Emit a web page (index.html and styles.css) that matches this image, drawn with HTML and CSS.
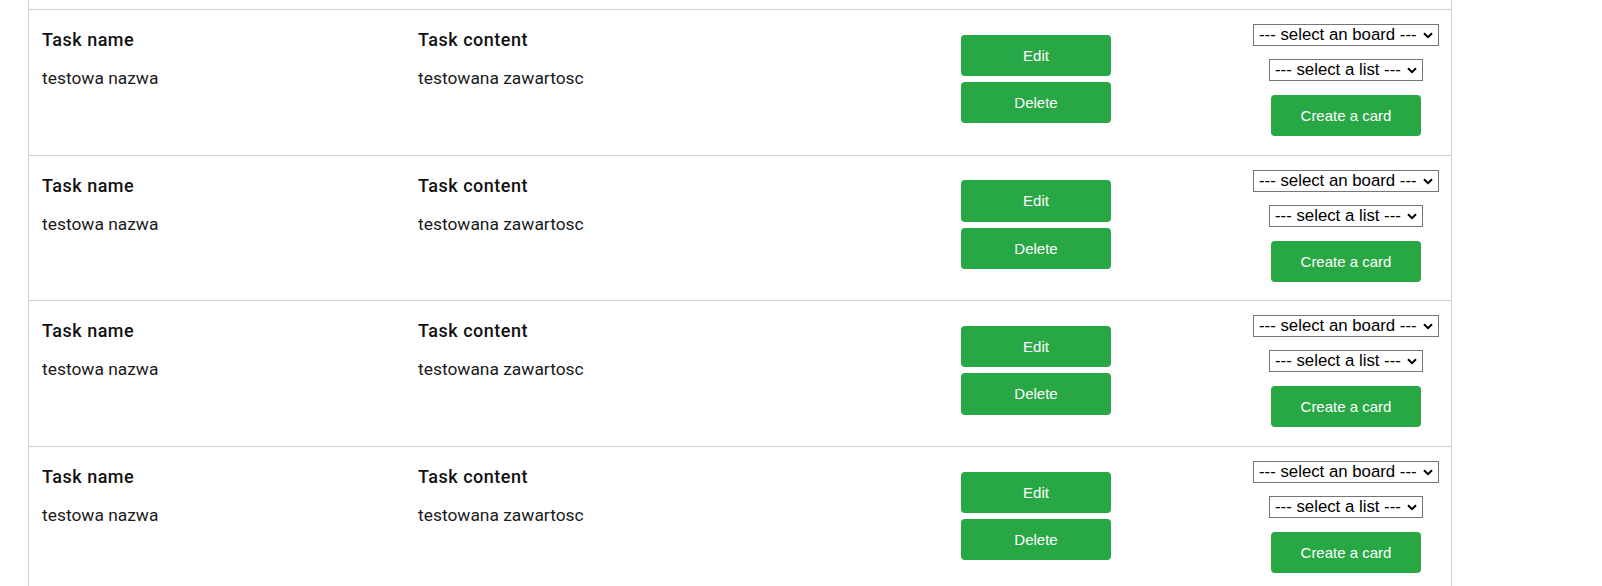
FILE: index.html
```html
<!DOCTYPE html>
<html lang="en">
<head>
<meta charset="utf-8">
<title>Tasks</title>
<link rel="stylesheet" href="styles.css">
</head>
<body>
<div class="board">
  <div class="tail"></div>

  <div class="task">
    <div class="field">
      <div class="label">Task name</div>
      <div class="value">testowa nazwa</div>
    </div>
    <div class="field">
      <div class="label">Task content</div>
      <div class="value">testowana zawartosc</div>
    </div>
    <div class="actions">
      <button class="btn">Edit</button>
      <button class="btn">Delete</button>
    </div>
    <div class="trello">
      <div class="pick pick-board">
        <select class="sel"><option>--- select an board ---</option></select>
        <svg class="chev" width="10" height="7" viewBox="0 0 10 7"><path d="M1 1.2 L5 5.2 L9 1.2" fill="none" stroke="#000" stroke-width="2"/></svg>
      </div>
      <div class="pick pick-list">
        <select class="sel"><option>--- select a list ---</option></select>
        <svg class="chev" width="10" height="7" viewBox="0 0 10 7"><path d="M1 1.2 L5 5.2 L9 1.2" fill="none" stroke="#000" stroke-width="2"/></svg>
      </div>
      <button class="btn btn-create">Create a card</button>
    </div>
  </div>

  <div class="task">
    <div class="field">
      <div class="label">Task name</div>
      <div class="value">testowa nazwa</div>
    </div>
    <div class="field">
      <div class="label">Task content</div>
      <div class="value">testowana zawartosc</div>
    </div>
    <div class="actions">
      <button class="btn">Edit</button>
      <button class="btn">Delete</button>
    </div>
    <div class="trello">
      <div class="pick pick-board">
        <select class="sel"><option>--- select an board ---</option></select>
        <svg class="chev" width="10" height="7" viewBox="0 0 10 7"><path d="M1 1.2 L5 5.2 L9 1.2" fill="none" stroke="#000" stroke-width="2"/></svg>
      </div>
      <div class="pick pick-list">
        <select class="sel"><option>--- select a list ---</option></select>
        <svg class="chev" width="10" height="7" viewBox="0 0 10 7"><path d="M1 1.2 L5 5.2 L9 1.2" fill="none" stroke="#000" stroke-width="2"/></svg>
      </div>
      <button class="btn btn-create">Create a card</button>
    </div>
  </div>

  <div class="task">
    <div class="field">
      <div class="label">Task name</div>
      <div class="value">testowa nazwa</div>
    </div>
    <div class="field">
      <div class="label">Task content</div>
      <div class="value">testowana zawartosc</div>
    </div>
    <div class="actions">
      <button class="btn">Edit</button>
      <button class="btn">Delete</button>
    </div>
    <div class="trello">
      <div class="pick pick-board">
        <select class="sel"><option>--- select an board ---</option></select>
        <svg class="chev" width="10" height="7" viewBox="0 0 10 7"><path d="M1 1.2 L5 5.2 L9 1.2" fill="none" stroke="#000" stroke-width="2"/></svg>
      </div>
      <div class="pick pick-list">
        <select class="sel"><option>--- select a list ---</option></select>
        <svg class="chev" width="10" height="7" viewBox="0 0 10 7"><path d="M1 1.2 L5 5.2 L9 1.2" fill="none" stroke="#000" stroke-width="2"/></svg>
      </div>
      <button class="btn btn-create">Create a card</button>
    </div>
  </div>

  <div class="task">
    <div class="field">
      <div class="label">Task name</div>
      <div class="value">testowa nazwa</div>
    </div>
    <div class="field">
      <div class="label">Task content</div>
      <div class="value">testowana zawartosc</div>
    </div>
    <div class="actions">
      <button class="btn">Edit</button>
      <button class="btn">Delete</button>
    </div>
    <div class="trello">
      <div class="pick pick-board">
        <select class="sel"><option>--- select an board ---</option></select>
        <svg class="chev" width="10" height="7" viewBox="0 0 10 7"><path d="M1 1.2 L5 5.2 L9 1.2" fill="none" stroke="#000" stroke-width="2"/></svg>
      </div>
      <div class="pick pick-list">
        <select class="sel"><option>--- select a list ---</option></select>
        <svg class="chev" width="10" height="7" viewBox="0 0 10 7"><path d="M1 1.2 L5 5.2 L9 1.2" fill="none" stroke="#000" stroke-width="2"/></svg>
      </div>
      <button class="btn btn-create">Create a card</button>
    </div>
  </div>
</div>
</body>
</html>
```

FILE: styles.css
```css
html, body {
  margin: 0;
  padding: 0;
  background: #ffffff;
}

body {
  font-family: Roboto, "Liberation Sans", sans-serif;
  font-size: 16px;
  color: #1a1a1a;
  overflow: hidden;
}

.board {
  box-sizing: border-box;
  margin-left: 28px;
  width: 1424px;
  border-left: 1px solid #d0d0d0;
  border-right: 1px solid #d0d0d0;
}

.tail {
  height: 9px;
}

.task {
  box-sizing: border-box;
  height: 145.67px;
  border-top: 1px solid #d0d0d0;
  padding-left: 13px;
  display: grid;
  grid-template-columns: 376px 543px 150px 1fr;
  align-items: start;
}

.field {
  padding-top: 17.85px;
}

.label {
  font-size: 18px;
  font-weight: 500;
  letter-spacing: 0.5px;
  line-height: 24px;
  color: #111111;
}

.value {
  margin-top: 14.2px;
  font-size: 17.4px;
  line-height: 24px;
}

.actions {
  padding-top: 24.67px;
  display: flex;
  flex-direction: column;
  gap: 6px;
}

.btn {
  display: block;
  width: 150px;
  height: 41.33px;
  margin: 0;
  padding: 0;
  border: none;
  border-radius: 4px;
  background: #28a745;
  color: #ffffff;
  font-family: "Liberation Sans", Arial, sans-serif;
  font-size: 15px;
  cursor: pointer;
}

.trello {
  justify-self: end;
  width: 210px;
  padding-top: 14px;
  display: flex;
  flex-direction: column;
  align-items: center;
}

.pick {
  position: relative;
  height: 22px;
}

.pick-board {
  width: 186px;
}

.pick-list {
  width: 154px;
  margin-top: 13px;
}

.sel {
  -webkit-appearance: none;
  appearance: none;
  box-sizing: border-box;
  display: block;
  width: 100%;
  height: 22px;
  margin: 0;
  padding: 0 18px 0 5px;
  font-family: "Liberation Sans", Arial, sans-serif;
  font-size: 16.8px;
  line-height: 20px;
  color: #000000;
  background: #ffffff;
  border: 1px solid #767676;
  border-radius: 0;
}

.chev {
  position: absolute;
  right: 6px;
  top: 8px;
  pointer-events: none;
}

.btn-create {
  margin-top: 14px;
  height: 41px;
}
```
